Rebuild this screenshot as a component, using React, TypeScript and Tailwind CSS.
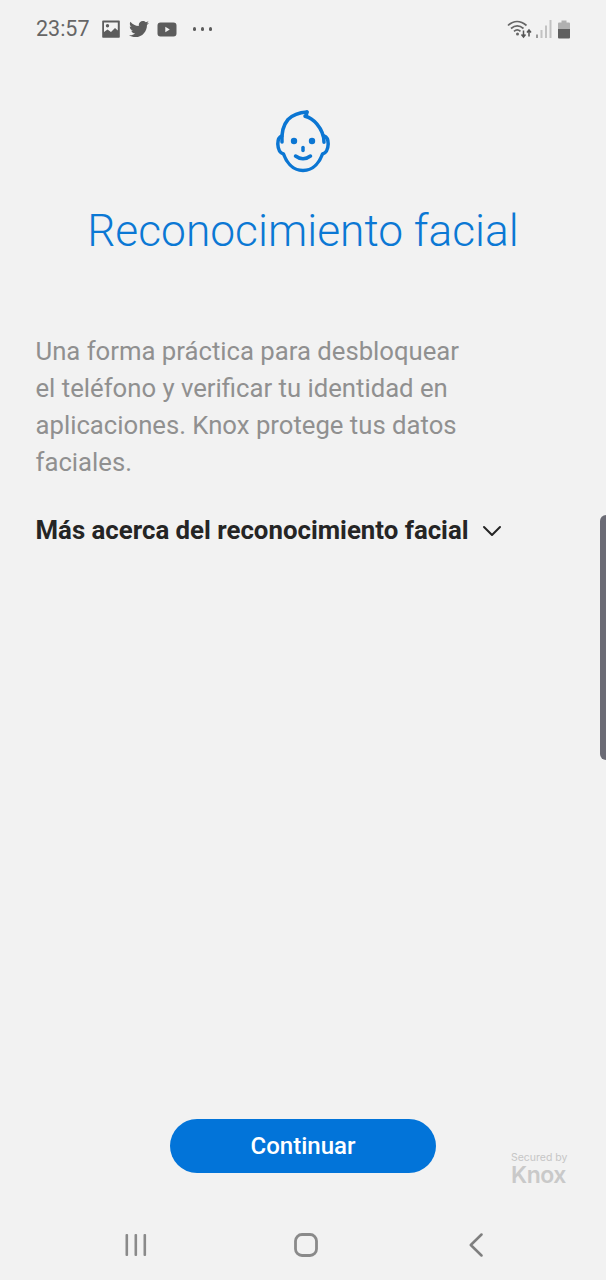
import React from "react";
import { FaTwitter } from "react-icons/fa";

function StatusLeft() {
  return (
    <div className="flex items-center">
      <span className="text-[21.5px] leading-none text-[#666666]">23:57</span>
      <svg className="ml-[12px]" width="18" height="18" viewBox="0 0 18 18">
        <path fillRule="evenodd" fill="#5c5c5c" d="M1 0.500h16a.8.8 0 0 1 .8.8v15.600a.8.8 0 0 1-.8.8H1a.8.8 0 0 1-.8-.8V1.300a.8.8 0 0 1 .8-.8zM2 2.500v9.500l3.500-2.500 3.500 2.500 4-4 2.800 2.500V2.500zM5.500 4a1.700 1.700 0 1 1 0 3.400 1.700 1.700 0 0 1 0-3.400z" />
      </svg>
      <FaTwitter className="ml-[9px] text-[#5c5c5c]" size={20} />
      <svg className="ml-[8px]" width="20" height="15" viewBox="0 0 20 15">
        <path fillRule="evenodd" fill="#5c5c5c" d="M3.500 0.500h13a3 3 0 0 1 3 3v8a3 3 0 0 1-3 3h-13a3 3 0 0 1-3-3v-8a3 3 0 0 1 3-3zM8.300 4.800v5.400l4.500-2.700z" />
      </svg>
      <div className="ml-[16px] flex gap-[4.500px]">
        <span className="h-[3.500px] w-[3.500px] rounded-full bg-[#5c5c5c]" />
        <span className="h-[3.500px] w-[3.500px] rounded-full bg-[#5c5c5c]" />
        <span className="h-[3.500px] w-[3.500px] rounded-full bg-[#5c5c5c]" />
      </div>
    </div>
  );
}

function StatusRight() {
  return (
    <div className="flex items-center">
      <svg width="26" height="20" viewBox="0 0 26 20" fill="none">
        <path d="M1 6.500C6.500 1.200 13.500 1.200 19.500 6.500" stroke="#666" strokeWidth="1.700" />
        <path d="M4 9.500C8 6 12.500 6 16.500 9.500" stroke="#666" strokeWidth="1.700" />
        <path d="M7 12.300C9 10.500 11.500 10.500 13.500 12.300" stroke="#666" strokeWidth="1.700" />
        <circle cx="10.500" cy="15" r="1.500" fill="#666" />
        <path d="M16.500 11.500v6M14.500 15.500l2 2.500 2-2.500" stroke="#555" strokeWidth="1.500" />
        <path d="M22 17.500v-6M20 13.500l2-2.500 2 2.500" stroke="#555" strokeWidth="1.500" />
      </svg>
      <svg className="ml-[2px]" width="17" height="20" viewBox="0 0 17 20">
        <rect x="1" y="15.500" width="2" height="3.500" fill="#999" />
        <rect x="5.500" y="11" width="2" height="8" fill="#c2c2c2" />
        <rect x="10" y="6.500" width="2" height="12.500" fill="#c2c2c2" />
        <rect x="14.500" y="1" width="2" height="18" fill="#c2c2c2" />
      </svg>
      <svg className="ml-[5px]" width="14" height="19" viewBox="0 0 14 19">
        <path d="M4.500 0.500h5v2h2.500a1 1 0 0 1 1 1V9H1V3.500a1 1 0 0 1 1-1h2.500z" fill="#b0b0b0" />
        <path d="M1 9h12v8.500a1 1 0 0 1-1 1H2a1 1 0 0 1-1-1z" fill="#5f5f5f" />
      </svg>
    </div>
  );
}

function BabyFace() {
  return (
    <svg width="54" height="64" viewBox="0 0 54 64" fill="none" stroke="#0b76d3" strokeWidth="3.500" strokeLinecap="round" strokeLinejoin="round">
      <path d="M6 33C5.500 25 6.500 17 12 10.500 17 5.500 24 3.500 31 3" />
      <path d="M31 3c0 2-1 3.500-2 4.200 4 .8 8 3 12 8 5 6 7 12 7 18" />
      <path d="M6 27C3 28 1.800 31 1.800 35c.2 5 2.200 9 5.700 10 2.500 7 8.500 16.500 19.500 16.500S44 52 46.500 45c3.500-1 5.500-5 5.700-10 0-4-1.200-7-4.200-8" />
      <path d="M27 38.500v3" />
      <path d="M19.500 47c4.800 3.600 10.200 3.600 15 0" />
      <circle cx="18" cy="32" r="3.200" fill="#0b76d3" stroke="none" />
      <circle cx="36" cy="32" r="3.200" fill="#0b76d3" stroke="none" />
    </svg>
  );
}

export default function App() {
  return (
    <div className="relative flex h-[1280px] w-[606px] flex-col overflow-hidden bg-[#f2f2f2] font-['Roboto',sans-serif]">
      <div className="flex h-[58px] items-center justify-between pl-[36px] pr-[35px]">
        <StatusLeft />
        <StatusRight />
      </div>

      <div className="mt-[51px] flex justify-center">
        <BabyFace />
      </div>

      <h1 className="mt-[33px] text-center text-[44.300px] font-light leading-[50px] text-[#0b78d4]">
        Reconocimiento facial
      </h1>

      <p className="mt-[77px] w-[460px] pl-[35.500px] text-[25.700px] leading-[37px] text-[#909090]">
        Una forma práctica para desbloquear el teléfono y verificar tu identidad en aplicaciones. Knox protege tus datos faciales.
      </p>

      <div className="mt-[31px] flex items-center pl-[35.500px]">
        <span className="text-[25.800px] font-bold leading-[37px] text-[#252525]">
          Más acerca del reconocimiento facial
        </span>
        <svg className="ml-[13px]" width="20" height="12" viewBox="0 0 20 12" fill="none">
          <path d="M2 2l8 8 8-8" stroke="#252525" strokeWidth="2" strokeLinecap="round" strokeLinejoin="round" />
        </svg>
      </div>

      <div className="relative mt-auto flex justify-center">
        <button className="h-[54px] w-[266px] rounded-full bg-[#0274d9] text-[24px] font-medium text-white">
          Continuar
        </button>
        <div className="absolute left-[511px] top-[33px] flex w-[60px] flex-col font-['Inter',sans-serif]">
          <span className="text-[10.500px] leading-[12px] text-[#c6c6c6]">Secured by</span>
          <span className="text-[23px] font-semibold leading-[22px] tracking-[-0.5px] text-[#c9c9c9]">Knox</span>
        </div>
      </div>

      <div className="mt-[45px] mb-[8px] flex h-[54px] items-center pl-[125px]">
        <svg width="22" height="22" viewBox="0 0 22 22">
          <rect x="0.500" y="0" width="2.600" height="22" rx="1" fill="#8a8a8a" />
          <rect x="9.500" y="0" width="2.600" height="22" rx="1" fill="#8a8a8a" />
          <rect x="18.500" y="0" width="2.600" height="22" rx="1" fill="#8a8a8a" />
        </svg>
        <svg className="ml-[147px]" width="24" height="24" viewBox="0 0 24 24" fill="none">
          <rect x="1.500" y="1.500" width="21" height="21" rx="6.500" stroke="#8a8a8a" strokeWidth="2.800" />
        </svg>
        <svg className="ml-[151px]" width="14" height="24" viewBox="0 0 14 24" fill="none">
          <path d="M12.500 1.500L1.800 12l10.700 10.500" stroke="#7f7f7f" strokeWidth="2.500" strokeLinecap="round" strokeLinejoin="round" />
        </svg>
      </div>

      <div className="absolute right-0 top-[515px] h-[245px] w-[6px] rounded-l-[6px] bg-[#6b6b75]" />
    </div>
  );
}
